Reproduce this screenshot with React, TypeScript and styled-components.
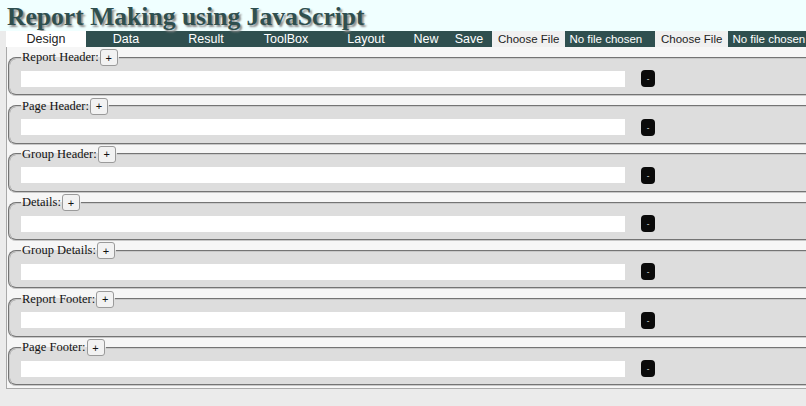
import React from 'react';
import styled, { createGlobalStyle } from 'styled-components';

const GlobalStyle = createGlobalStyle`
  html, body {
    margin: 0;
    padding: 0;
    background: #ebebeb;
    overflow: hidden;
  }
`;

const Header = styled.div`
  background: #f0ffff;
  height: 31px;
  padding-left: 7px;
`;

const Title = styled.h1`
  margin: 0;
  font-family: 'Liberation Serif', 'Times New Roman', serif;
  font-size: 25.6px;
  line-height: 33px;
  font-weight: bold;
  color: #2f4f4f;
  text-shadow: 2px 2px 2px #8a8a8a;
  white-space: nowrap;
`;

const Main = styled.div`
  margin-left: 6px;
  width: 1000px;
`;

const Nav = styled.div`
  display: flex;
  align-items: center;
  height: 16px;
  background: #2f4f4f;
  font-family: 'Liberation Sans', Arial, sans-serif;
  font-size: 12.5px;
`;

const Tab = styled.div<{ active?: boolean; w?: number }>`
  width: ${(p) => p.w ?? 80}px;
  height: 16px;
  line-height: 16px;
  text-align: center;
  color: ${(p) => (p.active ? '#222' : '#fff')};
  background: ${(p) => (p.active ? '#fff' : 'transparent')};
`;

const FileInput = styled.input`
  color: #fff;
  font-family: 'Liberation Sans', Arial, sans-serif;
  font-size: 11.5px;
  width: 163px;
  flex: none;

  &::file-selector-button {
    font-family: 'Liberation Sans', Arial, sans-serif;
    font-size: 11.5px;
    background: #f0f0f0;
    color: #222;
    border: none;
    height: 16px;
    padding: 0 6px;
    margin-right: 4px;
  }
`;

const Body = styled.div`
  background: #f6f6f6;
  border-left: 1px solid #a9a9a9;
  border-bottom: 1px solid #a9a9a9;
  padding: 1px 0 2px 1px;
`;

const Section = styled.fieldset`
  margin: 1.3px 0 0 0;
  padding: 4px 10px 7px 11px;
  border: 2px groove #c8c8c8;
  border-radius: 8px;
  background: #dddddd;
`;

const Legend = styled.legend`
  padding: 0 1px 0 1px;
  font-family: 'Liberation Serif', 'Times New Roman', serif;
  font-size: 12.5px;
  color: #111;
  display: flex;
  align-items: center;
`;

const AddButton = styled.button`
  font-family: 'Liberation Sans', Arial, sans-serif;
  font-size: 11px;
  height: 17px;
  min-width: 18px;
  padding: 0 4px;
  margin-left: 1px;
  border: 1px solid #9a9a9a;
  border-radius: 3px;
  background: #f2f2f2;
  color: #111;
`;

const Row = styled.div`
  display: flex;
  align-items: center;
`;

const Field = styled.div`
  width: 604px;
  height: 16px;
  background: #fff;
`;

const RemoveButton = styled.button`
  margin-left: 16px;
  width: 14px;
  height: 17px;
  padding: 0;
  border: none;
  border-radius: 4px;
  background: #0a0a0a;
  color: #fff;
  font-size: 8px;
  line-height: 17px;
`;

const tabs = ['Design', 'Data', 'Result', 'ToolBox', 'Layout'];
const sections = [
  'Report Header',
  'Page Header',
  'Group Header',
  'Details',
  'Group Details',
  'Report Footer',
  'Page Footer',
];

export default function App() {
  return (
    <>
      <GlobalStyle />
      <Header>
        <Title>Report Making using JavaScript</Title>
      </Header>
      <Main>
        <Nav>
          {tabs.map((t, i) => (
            <Tab key={t} active={i === 0}>
              {t}
            </Tab>
          ))}
          <Tab w={40}>New</Tab>
          <Tab w={46}>Save</Tab>
          <FileInput type="file" />
          <FileInput type="file" />
        </Nav>
        <Body>
          {sections.map((s) => (
            <Section key={s}>
              <Legend>
                {s}:<AddButton type="button">+</AddButton>
              </Legend>
              <Row>
                <Field />
                <RemoveButton type="button">-</RemoveButton>
              </Row>
            </Section>
          ))}
        </Body>
      </Main>
    </>
  );
}
